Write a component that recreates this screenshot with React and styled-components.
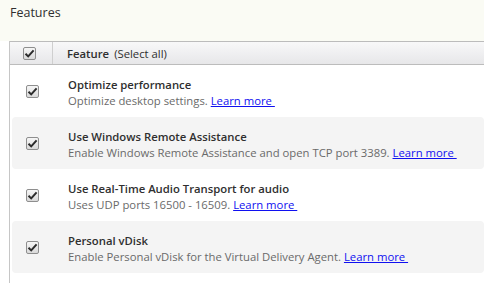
import React from "react";
import styled, { createGlobalStyle } from "styled-components";

const GlobalStyle = createGlobalStyle`
  html, body {
    margin: 0;
    padding: 0;
    background: #ffffff;
    font-family: "Open Sans", "Noto Sans", "Liberation Sans", sans-serif;
    overflow: hidden;
  }
`;

const Page = styled.div`
  width: 484px;
  height: 283px;
  display: flex;
  flex-direction: column;
`;

const TitleBar = styled.div`
  height: 41px;
  background: #fafbf4;
  padding: 4px 0 0 10px;
  box-sizing: border-box;
  font-size: 12.5px;
  color: #2f2f2f;
`;

const Table = styled.div`
  flex: 1;
  margin-left: 9px;
  border-left: 1px solid #c6c6c6;
  display: flex;
  flex-direction: column;
`;

const HeaderRow = styled.div`
  height: 22px;
  border-top: 1px solid #bcbcbc;
  border-bottom: 1px solid #bcbcbc;
  background: linear-gradient(#f8f8f9, #e7e7e9);
  display: flex;
  align-items: center;
`;

const HeaderCheckCell = styled.div`
  width: 43px;
  height: 100%;
  border-right: 1px solid #cfcfcf;
  display: flex;
  align-items: center;
  padding-left: 13px;
  box-sizing: border-box;
`;

const HeaderLabel = styled.div`
  padding-left: 14px;
  font-size: 11.3px;
  color: #2f2f2f;

  b {
    font-weight: 600;
    margin-right: 5px;
  }
`;

const Row = styled.div`
  height: 52px;
  margin-left: 2px;
  border-radius: 4px;
  background: ${(p) => (p.$shaded ? "#f4f4f4" : "transparent")};
  display: flex;
  align-items: center;
`;

const CheckCell = styled.div`
  width: 56px;
  padding-left: 14px;
  box-sizing: border-box;
  display: flex;
  align-items: center;
  flex-shrink: 0;
`;

const Info = styled.div`
  display: flex;
  flex-direction: column;
  font-size: 11.3px;
  line-height: 16px;
  white-space: nowrap;
  margin-top: 3px;
`;

const Name = styled.div`
  font-weight: 600;
  color: #2f2f2f;
`;

const Desc = styled.div`
  color: #6a6a6a;
`;

const Link = styled.a`
  color: #1010f0;
  text-decoration: underline;
  cursor: pointer;
`;

const Box = styled.span`
  width: 13px;
  height: 13px;
  border: 1px solid #8e8e8e;
  border-radius: 2px;
  background: linear-gradient(#f6f6f6, #d9d9d9);
  display: inline-flex;
  align-items: center;
  justify-content: center;
  box-sizing: border-box;
`;

function Check() {
  return (
    <Box>
      <svg width="11" height="11" viewBox="0 0 11 11">
        <path d="M1.5 5.8 L4.2 8.4 L9.6 2.4" fill="none" stroke="#2b2b2b" strokeWidth="2" />
      </svg>
    </Box>
  );
}

const features = [
  { name: "Optimize performance", desc: "Optimize desktop settings." },
  { name: "Use Windows Remote Assistance", desc: "Enable Windows Remote Assistance and open TCP port 3389." },
  { name: "Use Real-Time Audio Transport for audio", desc: "Uses UDP ports 16500 - 16509." },
  { name: "Personal vDisk", desc: "Enable Personal vDisk for the Virtual Delivery Agent." },
];

export default function App() {
  return (
    <Page>
      <GlobalStyle />
      <TitleBar>Features</TitleBar>
      <Table>
        <HeaderRow>
          <HeaderCheckCell>
            <Check />
          </HeaderCheckCell>
          <HeaderLabel>
            <b>Feature</b>(Select all)
          </HeaderLabel>
        </HeaderRow>
        {features.map((f, i) => (
          <Row key={f.name} $shaded={i % 2 === 1}>
            <CheckCell>
              <Check />
            </CheckCell>
            <Info>
              <Name>{f.name}</Name>
              <Desc>
                {f.desc} <Link>Learn more&nbsp;</Link>
              </Desc>
            </Info>
          </Row>
        ))}
      </Table>
    </Page>
  );
}
